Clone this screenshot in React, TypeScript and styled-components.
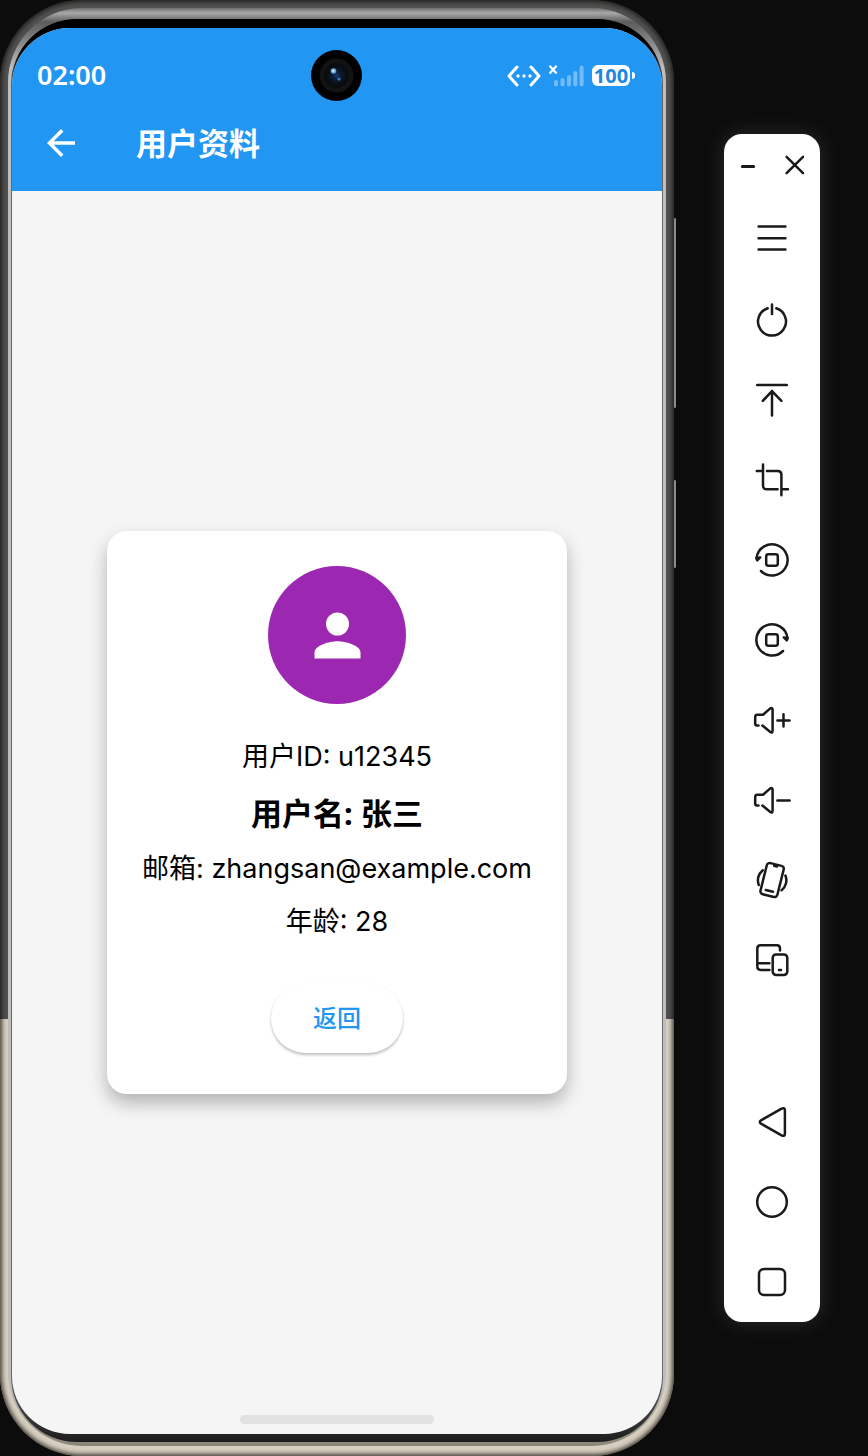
import React from "react";
import styled, { createGlobalStyle } from "styled-components";

const GlobalStyle = createGlobalStyle`
  * { box-sizing: border-box; }
  body {
    margin: 0;
    background: #0c0c0c;
    font-family: "Noto Sans", "Noto Sans CJK SC", sans-serif;
  }
  button {
    margin: 0;
    padding: 0;
    border: 0;
    background: none;
    color: inherit;
    font: inherit;
    cursor: pointer;
  }
`;

const Desktop = styled.div`
  display: flex;
  align-items: center;
  gap: 50px;
  min-height: 100vh;
  padding-right: 48px;
`;

/* ---------- device shell ---------- */

const Shell = styled.div`
  position: relative;
  flex: 1;
  min-width: 0;
  align-self: stretch;
  display: flex;
  padding: 8px 8px 10px;
  border-radius: 82px;
  background: linear-gradient(180deg, #505050 0 70%, #d6cebf 70% 100%);
  box-shadow: inset 0 0 4px 2px rgba(20, 18, 12, 0.75);
`;

const SideKey = styled.span<{ $top: string; $height: string }>`
  position: absolute;
  right: -2px;
  top: ${(p) => p.$top};
  height: ${(p) => p.$height};
  width: 2px;
  border-radius: 1px;
  background: #8a8a8a;
`;

const Rim = styled.div`
  flex: 1;
  min-width: 0;
  display: flex;
  padding: 11px 3px 4px;
  border-radius: 74px;
  background: linear-gradient(180deg, #6f6f6f 0, #a8a8a8 5px, #5c5c5c 14px, #bdbdbd 60px, #bdbdbd calc(100% - 60px), #8a8478 100%);
`;

const Bezel = styled.div`
  flex: 1;
  min-width: 0;
  display: flex;
  padding: 9px 1px 8px;
  border-radius: 66px;
  background: linear-gradient(180deg, #000 0 30px, #6a6a6a 70px, #6a6a6a calc(100% - 70px), #1c1c1c 100%);
`;

const Screen = styled.div`
  flex: 1;
  min-width: 0;
  display: flex;
  flex-direction: column;
  overflow: hidden;
  border-radius: 58px;
  background: #f5f5f5;
`;

const Header = styled.header`
  padding: 22px 0 5px;
  background: #2196f3;
  color: #fff;
`;

const StatusBar = styled.div`
  display: grid;
  grid-template-columns: 1fr auto 1fr;
  align-items: center;
  padding: 0 27px 0 25px;
`;

const Clock = styled.time`
  padding-bottom: 2px;
  font-size: 27px;
  line-height: 36px;
  font-weight: 600;
`;

const StatusIcons = styled.div`
  display: flex;
  align-items: center;
  justify-content: flex-end;
  gap: 8px;
`;

const Battery = styled.div`
  display: flex;
  align-items: center;
  gap: 2px;
`;

const BatteryLevel = styled.span`
  width: 38px;
  border-radius: 6px;
  background: #fff;
  color: #1f87e0;
  font-size: 20px;
  line-height: 21px;
  font-weight: 700;
  text-align: center;
`;

const BatteryTip = styled.span`
  width: 3px;
  height: 7px;
  border-radius: 0 3px 3px 0;
  background: #fff;
`;

const AppBar = styled.div`
  display: flex;
  align-items: center;
  gap: 54px;
  height: 85px;
  padding: 0 28px 2px;
`;

const IconButton = styled.button`
  display: flex;
`;

const Title = styled.h1`
  margin: 0;
  font-size: 31px;
  line-height: 42px;
  font-weight: 700;
`;

const Content = styled.main`
  flex: 1;
  display: flex;
  align-items: center;
  justify-content: center;
  padding: 24px 24px 0;
`;

const Card = styled.section`
  width: 100%;
  max-width: 460px;
  display: flex;
  flex-direction: column;
  align-items: center;
  padding: 35px 24px 41px;
  border-radius: 20px;
  background: #fff;
  color: #000;
  box-shadow: 0 9px 18px rgba(0, 0, 0, 0.27);
`;

const Avatar = styled.div`
  display: flex;
  align-items: center;
  justify-content: center;
  width: 138px;
  height: 138px;
  border-radius: 50%;
  background: #9c27b0;
`;

const Details = styled.div`
  display: flex;
  flex-direction: column;
  align-items: center;
  gap: 17px;
  margin: 35px 0 44px;
`;

const Detail = styled.p`
  margin: 0;
  font-family: Inter, "Noto Sans CJK SC", sans-serif;
  font-size: 27px;
  line-height: 36px;
  white-space: nowrap;
`;

const Name = styled.h2`
  margin: 0;
  font-size: 31px;
  line-height: 42px;
  font-weight: 700;
`;

const ReturnButton = styled.button`
  width: 132px;
  height: 69px;
  padding-bottom: 4px;
  border-radius: 35px;
  background: #fff;
  color: #2196f3;
  font-size: 24px;
  font-weight: 500;
  box-shadow: 0 2px 3px rgba(0, 0, 0, 0.26);
`;

const HomeArea = styled.div`
  display: flex;
  justify-content: center;
  padding: 5px 0 10px;
`;

const HomeIndicator = styled.span`
  width: 194px;
  height: 9px;
  border-radius: 5px;
  background: #e2e2e2;
`;

/* ---------- emulator tool panel ---------- */

const Panel = styled.aside`
  flex: none;
  width: 96px;
  border-radius: 18px;
  background: #fff;
  color: #1a1a1a;
  box-shadow: 0 0 22px rgba(255, 250, 240, 0.14);
`;

const WindowControls = styled.div`
  display: flex;
  justify-content: space-between;
  padding: 19px 13px 23px;
`;

const ToolGroup = styled.div<{ $spaced?: boolean }>`
  display: flex;
  flex-direction: column;
  margin-top: ${(p) => (p.$spaced ? "82px" : "0")};
`;

const ToolButton = styled.button`
  display: flex;
  align-items: center;
  justify-content: center;
  height: 80px;
`;

const Glyph = styled.svg`
  display: block;
  fill: none;
  stroke: currentColor;
  stroke-width: 2.5;
  stroke-linecap: round;
  stroke-linejoin: round;
`;

const RotateGlyph = () => (
  <>
    <path d="M8.6 21.5A15.6 15.6 0 1 1 13 35" />
    <path d="M8.3 22.2 9.2 24.4 12.2 21.4Z" />
    <rect x="18.2" y="18.2" width="11.6" height="11.6" rx="2.2" />
  </>
);

const SpeakerGlyph = () => (
  <path d="M10.5 29.5H9Q7.2 29.5 7.2 27.5V21Q7.2 18.8 9.4 18.8H15L22 12.6Q24.6 11 24.6 13.8V34.6Q24.6 37.8 22 35.8L14.4 29.5" />
);

const tools: { label: string; glyph: React.ReactNode }[] = [
  { label: "菜单", glyph: <path d="M10.6 10.4H37.4M10.6 22.3H37.4M10.6 33.6H37.4" /> },
  { label: "电源", glyph: <path d="M19.7 12.3A14 14 0 1 0 28.3 12.3M24 8.6V18" /> },
  { label: "上滑", glyph: <path d="M9.2 9H38.8M24 15V39.4M14.8 24.8 24 15.2 33.4 24.8" /> },
  {
    label: "截屏",
    glyph: <path d="M8.8 15H13.4M15 8.6V29.5Q15 33.3 18.8 33.3H29.6M19 15H29.6Q33.4 15 33.4 18.8V39.2M34.6 33.3H40" />,
  },
  { label: "向左旋转", glyph: <RotateGlyph /> },
  {
    label: "向右旋转",
    glyph: (
      <g transform="matrix(-1 0 0 1 48 0)">
        <RotateGlyph />
      </g>
    ),
  },
  {
    label: "音量加",
    glyph: (
      <>
        <SpeakerGlyph />
        <path d="M29.4 24.4H41.6M35.5 18.2V30.6" />
      </>
    ),
  },
  {
    label: "音量减",
    glyph: (
      <>
        <SpeakerGlyph />
        <path d="M29.4 24.4H41.6" />
      </>
    ),
  },
  {
    label: "摇一摇",
    glyph: (
      <>
        <g transform="rotate(14 24 24)">
          <rect x="15.4" y="8" width="17.4" height="32" rx="3" />
          <path d="M22.6 9.6H25.6M20.4 35.2H27.8" />
        </g>
        <path d="M14.8 14.2A13 13 0 0 0 10.8 29M37.4 19.6A12.5 12.5 0 0 1 33.6 34.2" />
      </>
    ),
  },
  {
    label: "多设备",
    glyph: (
      <>
        <path d="M32 14.4V12.4Q32 9.3 28.9 9.3H12.6Q9.3 9.3 9.3 12.6V30.6Q9.3 33.9 12.6 33.9H21.4M9.8 27.3H21.4" />
        <rect x="24.7" y="18.4" width="14.6" height="20.6" rx="3.4" />
        <path d="M31 34H33" />
      </>
    ),
  },
];

const navigation: { label: string; glyph: React.ReactNode }[] = [
  {
    label: "后退",
    glyph: <path d="M13 22.3 33.6 10.6Q36.9 9.2 36.9 12.6V35.4Q36.9 38.8 33.6 37.4L13 25.7Q10.6 24 13 22.3Z" />,
  },
  { label: "主页", glyph: <circle cx="24" cy="24" r="14.8" /> },
  { label: "最近任务", glyph: <rect x="11" y="11" width="26" height="26" rx="5" /> },
];

const ToolButtons = ({ items }: { items: { label: string; glyph: React.ReactNode }[] }) => (
  <>
    {items.map((item) => (
      <ToolButton key={item.label} type="button" aria-label={item.label}>
        <Glyph width="48" height="48" viewBox="0 0 48 48">
          {item.glyph}
        </Glyph>
      </ToolButton>
    ))}
  </>
);

const Camera = () => (
  <svg width="51" height="51" viewBox="0 0 51 51" aria-hidden="true">
    <defs>
      <radialGradient id="lens">
        <stop offset="0" stopColor="#173a66" />
        <stop offset="0.5" stopColor="#0b1a33" />
        <stop offset="1" stopColor="#0b0e14" />
      </radialGradient>
    </defs>
    <circle cx="25.5" cy="25.5" r="25.5" fill="#000" />
    <circle cx="25.5" cy="25.5" r="17" fill="#111214" />
    <circle cx="25.5" cy="25.5" r="12.5" fill="#0a0c10" />
    <circle cx="25.5" cy="25.5" r="9" fill="url(#lens)" />
    <circle cx="22.5" cy="21" r="2.8" fill="#5fa5da" />
    <circle cx="22.3" cy="20.8" r="1.2" fill="#d4efff" />
    <circle cx="28" cy="29" r="1.6" fill="#3f78b8" />
  </svg>
);

export default function App() {
  return (
    <>
      <GlobalStyle />
      <Desktop>
        <Shell>
          <SideKey $top="15%" $height="13%" />
          <SideKey $top="33%" $height="6%" />
          <Rim>
            <Bezel>
              <Screen>
                <Header>
                  <StatusBar>
                    <Clock>02:00</Clock>
                    <Camera />
                    <StatusIcons>
                      <svg width="34" height="22" viewBox="0 0 34 22" aria-hidden="true">
                        <path
                          d="M10 2 2 11 10 20M24 2 32 11 24 20"
                          fill="none"
                          stroke="#fff"
                          strokeWidth="3"
                          strokeLinecap="round"
                          strokeLinejoin="round"
                        />
                        <g fill="#fff">
                          <circle cx="11" cy="11" r="1.7" />
                          <circle cx="17" cy="11" r="1.7" />
                          <circle cx="23" cy="11" r="1.7" />
                        </g>
                      </svg>
                      <svg width="35" height="22" viewBox="0 0 35 22" aria-hidden="true">
                        <path d="M0.6 0.8 7.6 8.6M7.6 0.8 0.6 8.6" stroke="#fff" strokeWidth="2.2" />
                        <g fill="#fff" fillOpacity="0.36">
                          <rect x="5" y="15" width="4" height="6.5" rx="2" />
                          <rect x="11.5" y="13" width="4" height="8.5" rx="2" />
                          <rect x="18" y="10" width="4" height="11.5" rx="2" />
                          <rect x="24.3" y="6" width="4" height="15.5" rx="2" />
                          <rect x="30.6" y="0.5" width="4" height="21" rx="2" />
                        </g>
                      </svg>
                      <Battery>
                        <BatteryLevel>100</BatteryLevel>
                        <BatteryTip />
                      </Battery>
                    </StatusIcons>
                  </StatusBar>
                  <AppBar>
                    <IconButton type="button" aria-label="返回上一页">
                      <svg width="42" height="42" viewBox="0 0 24 24" fill="currentColor">
                        <path d="M20 11H7.83l5.59-5.59L12 4l-8 8 8 8 1.41-1.41L7.83 13H20v-2z" />
                      </svg>
                    </IconButton>
                    <Title>用户资料</Title>
                  </AppBar>
                </Header>
                <Content>
                  <Card>
                    <Avatar>
                      <svg width="69" height="69" viewBox="0 0 24 24" fill="#fff" aria-hidden="true">
                        <circle cx="12" cy="8" r="4" />
                        <path d="M12 14c-2.67 0-8 1.34-8 4v2h16v-2c0-2.66-5.33-4-8-4z" />
                      </svg>
                    </Avatar>
                    <Details>
                      <Detail>用户ID: u12345</Detail>
                      <Name>用户名: 张三</Name>
                      <Detail>邮箱: zhangsan@example.com</Detail>
                      <Detail>年龄: 28</Detail>
                    </Details>
                    <ReturnButton type="button">返回</ReturnButton>
                  </Card>
                </Content>
                <HomeArea>
                  <HomeIndicator />
                </HomeArea>
              </Screen>
            </Bezel>
          </Rim>
        </Shell>
        <Panel>
          <WindowControls>
            <IconButton type="button" aria-label="最小化">
              <Glyph width="24" height="24" viewBox="0 0 24 24">
                <path d="M5.4 13.6H16.6" strokeWidth="3" />
              </Glyph>
            </IconButton>
            <IconButton type="button" aria-label="关闭">
              <Glyph width="24" height="24" viewBox="0 0 24 24">
                <path d="M3.6 3.8 20 20.2M20 3.8 3.6 20.2" />
              </Glyph>
            </IconButton>
          </WindowControls>
          <ToolGroup>
            <ToolButtons items={tools} />
          </ToolGroup>
          <ToolGroup $spaced>
            <ToolButtons items={navigation} />
          </ToolGroup>
        </Panel>
      </Desktop>
    </>
  );
}
